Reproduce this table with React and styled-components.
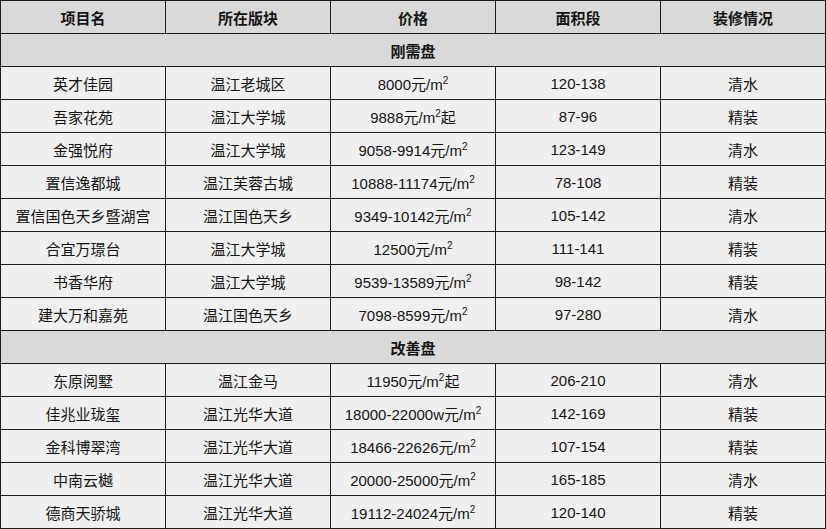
import React from 'react';
import styled, { createGlobalStyle } from 'styled-components';

const GlobalStyle = createGlobalStyle`
  body {
    margin: 0;
    background: #ffffff;
    font-family: "Liberation Sans", "Noto Sans CJK SC", sans-serif;
  }
`;

const Table = styled.table`
  width: 826px;
  border-collapse: collapse;
  table-layout: fixed;
  color: #151515;
  font-size: 15px;
`;

const HeadCell = styled.th`
  height: 32px;
  padding: 0;
  border: 1px solid #1a1a1a;
  background: #d9d9d9;
  font-weight: bold;
  text-align: center;
  vertical-align: middle;
`;

const SectionCell = styled.td`
  height: 32px;
  padding: 0;
  border: 1px solid #1a1a1a;
  background: #d9d9d9;
  font-weight: bold;
  text-align: center;
`;

const Cell = styled.td`
  height: 32px;
  padding: 0;
  border: 1px solid #1a1a1a;
  background: #efefef;
  text-align: center;
  white-space: nowrap;
`;

const Sup = styled.sup`
  font-size: 10px;
  vertical-align: 6px;
  line-height: 0;
`;

const columns = ['项目名', '所在版块', '价格', '面积段', '装修情况'];

const sections = [
  {
    title: '刚需盘',
    rows: [
      ['英才佳园', '温江老城区', '8000元/m', '', '120-138', '清水'],
      ['吾家花苑', '温江大学城', '9888元/m', '起', '87-96', '精装'],
      ['金强悦府', '温江大学城', '9058-9914元/m', '', '123-149', '清水'],
      ['置信逸都城', '温江芙蓉古城', '10888-11174元/m', '', '78-108', '精装'],
      ['置信国色天乡暨湖宫', '温江国色天乡', '9349-10142元/m', '', '105-142', '清水'],
      ['合宜万璟台', '温江大学城', '12500元/m', '', '111-141', '精装'],
      ['书香华府', '温江大学城', '9539-13589元/m', '', '98-142', '精装'],
      ['建大万和嘉苑', '温江国色天乡', '7098-8599元/m', '', '97-280', '清水'],
    ],
  },
  {
    title: '改善盘',
    rows: [
      ['东原阅墅', '温江金马', '11950元/m', '起', '206-210', '清水'],
      ['佳兆业珑玺', '温江光华大道', '18000-22000w元/m', '', '142-169', '精装'],
      ['金科博翠湾', '温江光华大道', '18466-22626元/m', '', '107-154', '精装'],
      ['中南云樾', '温江光华大道', '20000-25000元/m', '', '165-185', '清水'],
      ['德商天骄城', '温江光华大道', '19112-24024元/m', '', '120-140', '精装'],
    ],
  },
];

const App = () => (
  <>
    <GlobalStyle />
    <Table>
      <thead>
        <tr>
          {columns.map((c) => (
            <HeadCell key={c}>{c}</HeadCell>
          ))}
        </tr>
      </thead>
      <tbody>
        {sections.map((s) => (
          <React.Fragment key={s.title}>
            <tr>
              <SectionCell colSpan={5}>{s.title}</SectionCell>
            </tr>
            {s.rows.map(([name, area, price, suffix, size, deco]) => (
              <tr key={name}>
                <Cell>{name}</Cell>
                <Cell>{area}</Cell>
                <Cell>
                  {price}
                  <Sup>2</Sup>
                  {suffix}
                </Cell>
                <Cell>{size}</Cell>
                <Cell>{deco}</Cell>
              </tr>
            ))}
          </React.Fragment>
        ))}
      </tbody>
    </Table>
  </>
);

export default App;
